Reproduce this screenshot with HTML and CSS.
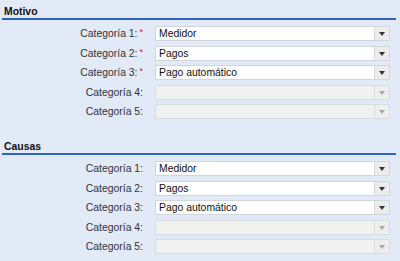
FILE: index.html
```html
<!DOCTYPE html>
<html lang="es">
<head>
<meta charset="utf-8">
<title>Formulario</title>
<link rel="stylesheet" href="styles.css">
</head>
<body>
<section class="group">
  <h2 class="group-title">Motivo</h2>
  <div class="rows">
    <div class="row"><span class="label">Categoría 1:<i class="req">*</i></span><div class="combo"><span class="value">Medidor</span><span class="btn"><span class="arrow"></span></span></div></div>
    <div class="row"><span class="label">Categoría 2:<i class="req">*</i></span><div class="combo"><span class="value">Pagos</span><span class="btn"><span class="arrow"></span></span></div></div>
    <div class="row"><span class="label">Categoría 3:<i class="req">*</i></span><div class="combo"><span class="value">Pago automático</span><span class="btn"><span class="arrow"></span></span></div></div>
    <div class="row"><span class="label">Categoría 4:</span><div class="combo disabled"><span class="value"></span><span class="btn"><span class="arrow"></span></span></div></div>
    <div class="row"><span class="label">Categoría 5:</span><div class="combo disabled"><span class="value"></span><span class="btn"><span class="arrow"></span></span></div></div>
  </div>
</section>
<section class="group">
  <h2 class="group-title">Causas</h2>
  <div class="rows">
    <div class="row"><span class="label">Categoría 1:</span><div class="combo"><span class="value">Medidor</span><span class="btn"><span class="arrow"></span></span></div></div>
    <div class="row"><span class="label">Categoría 2:</span><div class="combo"><span class="value">Pagos</span><span class="btn"><span class="arrow"></span></span></div></div>
    <div class="row"><span class="label">Categoría 3:</span><div class="combo"><span class="value">Pago automático</span><span class="btn"><span class="arrow"></span></span></div></div>
    <div class="row"><span class="label">Categoría 4:</span><div class="combo disabled"><span class="value"></span><span class="btn"><span class="arrow"></span></span></div></div>
    <div class="row"><span class="label">Categoría 5:</span><div class="combo disabled"><span class="value"></span><span class="btn"><span class="arrow"></span></span></div></div>
  </div>
</section>
</body>
</html>
```
FILE: styles.css
```css
html, body {
  margin: 0;
  padding: 0;
  background: #e3eaf7;
}
body {
  font-family: "Liberation Sans", Arial, sans-serif;
  font-size: 10.4px;
  color: #333;
  width: 400px;
  height: 261px;
  overflow: hidden;
}
.group {
  margin-bottom: 16px;
}
.group-title {
  margin: 0 4px 0 2px;
  padding: 5px 0 0 2px;
  font-size: 10.4px;
  line-height: 13px;
  font-weight: bold;
  color: #111;
  border-bottom: 2px solid #2f63c2;
}
.rows {
  display: flex;
  flex-direction: column;
  gap: 4.5px;
  padding-top: 6px;
}
.row {
  display: flex;
  align-items: center;
  height: 15px;
}
.label {
  width: 143px;
  text-align: right;
  white-space: nowrap;
  margin-right: 12px;
  color: #333;
}
.req {
  font-style: normal;
  font-size: 9px;
  color: #d42020;
  margin-left: 2px;
  position: relative;
  top: -2px;
}
.combo {
  display: flex;
  width: 235px;
  height: 15px;
  box-sizing: border-box;
  border: 1px solid #d2d6dc;
  background: #fff;
}
.combo .value {
  flex: 1;
  padding-left: 3px;
  line-height: 13px;
  color: #111;
  white-space: nowrap;
  overflow: hidden;
}
.btn {
  width: 14px;
  border-left: 1px solid #dcdcdc;
  background: #ececec;
  display: flex;
  align-items: center;
  justify-content: center;
}
.arrow {
  width: 0;
  height: 0;
  border-left: 3.5px solid transparent;
  border-right: 3.5px solid transparent;
  border-top: 4px solid #333;
  margin-top: 1px;
}
.combo.disabled {
  background: #f1f1f1;
  border-color: #d8dbe0;
}
.combo.disabled .btn {
  background: #eeeeee;
}
.combo.disabled .arrow {
  border-top-color: #a8a8a8;
}
```
